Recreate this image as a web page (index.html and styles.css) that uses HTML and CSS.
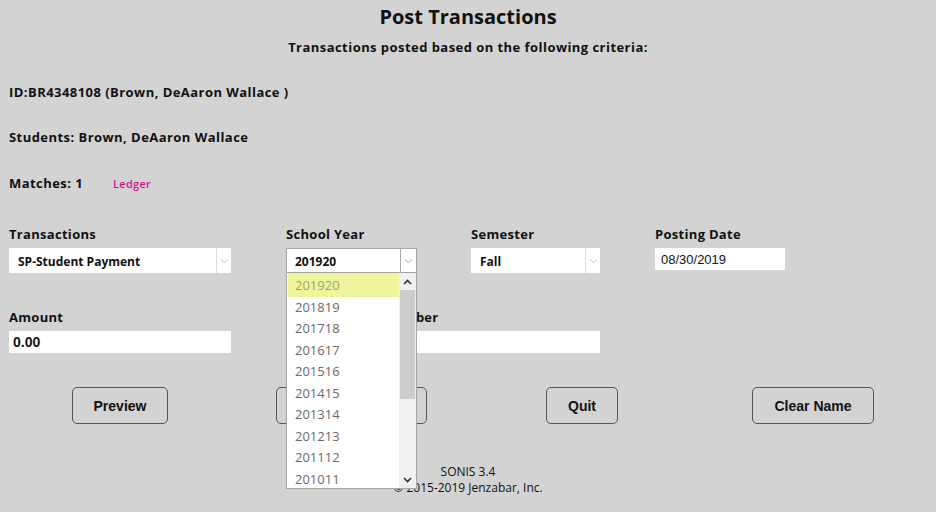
FILE: index.html
```html
<!DOCTYPE html>
<html lang="en">
<head>
    <meta charset="UTF-8">
    <meta name="viewport" content="width=device-width, initial-scale=1.0">
    <title>Post Transactions</title>
    <link rel="stylesheet" href="styles.css">
</head>
<body>
    <h1 class="page-title">Post Transactions</h1>
    <p class="subtitle">Transactions posted based on the following criteria:</p>

    <div class="info">
        <p class="info-line">ID:BR4348108 (Brown, DeAaron Wallace )</p>
        <p class="info-line">Students: Brown, DeAaron Wallace</p>
        <p class="info-line">Matches: 1 <a href="#" class="ledger">Ledger</a></p>
    </div>

    <div class="form-row">
        <div class="field">
            <label class="field-label">Transactions</label>
            <div class="select select-trans">
                <span class="select-value">SP-Student Payment</span>
                <span class="select-arrow"><svg width="9" height="6" viewBox="0 0 9 6"><path d="M1 1.5 L4.5 4.5 L8 1.5" fill="none" stroke="#c4c4c4" stroke-width="1"/></svg></span>
            </div>
        </div>
        <div class="field field-year">
            <label class="field-label">School Year</label>
            <div class="select select-year open">
                <span class="select-value">201920</span>
                <span class="select-arrow"><svg width="9" height="6" viewBox="0 0 9 6"><path d="M1 1.5 L4.5 4.5 L8 1.5" fill="none" stroke="#a8a8a8" stroke-width="1"/></svg></span>
            </div>
            <div class="dropdown">
                <ul class="options">
                    <li class="selected">201920</li>
                    <li>201819</li>
                    <li>201718</li>
                    <li>201617</li>
                    <li>201516</li>
                    <li>201415</li>
                    <li>201314</li>
                    <li>201213</li>
                    <li>201112</li>
                    <li>201011</li>
                </ul>
                <div class="scrollbar">
                    <span class="scroll-btn"><svg width="9" height="6" viewBox="0 0 9 6"><path d="M1 5 L4.5 1.5 L8 5" fill="none" stroke="#333" stroke-width="1.6"/></svg></span>
                    <span class="scroll-thumb"></span>
                    <span class="scroll-track"></span>
                    <span class="scroll-btn"><svg width="9" height="6" viewBox="0 0 9 6"><path d="M1 1 L4.5 4.5 L8 1" fill="none" stroke="#333" stroke-width="1.6"/></svg></span>
                </div>
            </div>
        </div>
        <div class="field">
            <label class="field-label">Semester</label>
            <div class="select select-sem">
                <span class="select-value">Fall</span>
                <span class="select-arrow"><svg width="9" height="6" viewBox="0 0 9 6"><path d="M1 1.5 L4.5 4.5 L8 1.5" fill="none" stroke="#c4c4c4" stroke-width="1"/></svg></span>
            </div>
        </div>
        <div class="field">
            <label class="field-label">Posting Date</label>
            <input class="text-input input-date" type="text" value="08/30/2019">
        </div>
    </div>

    <div class="form-row form-row-second">
        <div class="field">
            <label class="field-label">Amount</label>
            <input class="text-input input-amount" type="text" value="0.00">
        </div>
        <div class="field field-wide">
            <label class="field-label label-tight">Receipt/Check Number</label>
            <input class="text-input input-ref" type="text" value="">
        </div>
    </div>

    <div class="buttons">
        <button class="btn">Preview</button>
        <button class="btn btn-wide">Post Transactions</button>
        <button class="btn">Quit</button>
        <button class="btn">Clear Name</button>
    </div>

    <footer class="footer">
        <p>SONIS 3.4</p>
        <p>&copy; 2015-2019 Jenzabar, Inc.</p>
    </footer>
</body>
</html>
```

FILE: styles.css
```css
body {
    margin: 0;
    padding: 0;
    background-color: #d3d3d3;
    font-family: "Open Sans", "DejaVu Sans", sans-serif;
    color: #111;
}

p {
    margin: 0;
}

.page-title {
    margin: 4px 0 0;
    height: 26px;
    line-height: 26px;
    text-align: center;
    font-size: 20px;
    font-weight: 700;
}

.subtitle {
    margin-top: 7px;
    height: 20px;
    line-height: 20px;
    text-align: center;
    font-size: 13px;
    font-weight: 700;
    letter-spacing: 0.45px;
}

.info {
    padding-left: 9px;
}

.info-line {
    margin-top: 25px;
    height: 20px;
    line-height: 20px;
    font-size: 13px;
    font-weight: 700;
    letter-spacing: 0.45px;
}

.info-line:last-child {
    margin-top: 26px;
}

.ledger {
    margin-left: 26px;
    color: #d4148c;
    font-size: 11px;
    font-weight: 600;
    letter-spacing: 0.3px;
    text-decoration: none;
}

.form-row {
    display: grid;
    grid-template-columns: 277px 185px 184px auto;
    margin-top: 31px;
    padding-left: 9px;
}

.form-row-second {
    margin-top: 34px;
}

.field {
    position: relative;
}

.field-wide {
    grid-column: span 2;
}

.field-label {
    display: block;
    height: 20px;
    line-height: 20px;
    margin-bottom: 4px;
    font-size: 13px;
    font-weight: 700;
    letter-spacing: 0.3px;
}

.label-tight {
    letter-spacing: 0.1px;
}

.select {
    display: flex;
    align-items: stretch;
    height: 25px;
    background: white;
    box-sizing: border-box;
}

.select-value {
    flex-grow: 1;
    padding: 1px 0 0 9px;
    line-height: 26px;
    font-size: 12px;
    font-weight: 700;
}

.select-arrow {
    width: 14px;
    display: flex;
    align-items: center;
    justify-content: center;
    border-left: 1px solid #dcdcdc;
}

.select-trans {
    width: 222px;
}

.select-sem {
    width: 129px;
}

.select-year {
    width: 131px;
    border: 1px solid #a6a6a6;
}

.select-year .select-value {
    line-height: 24px;
    padding-left: 8px;
}

.select-year .select-arrow {
    width: 15px;
    border-left-color: #a6a6a6;
}

.text-input {
    display: block;
    height: 22px;
    box-sizing: border-box;
    border: none;
    outline: none;
    background: white;
    padding: 0 6px;
    font-family: "Liberation Sans", Arial, sans-serif;
    font-size: 13px;
    color: #111;
}

.input-date {
    width: 130px;
}

.input-amount {
    width: 222px;
    font-size: 14px;
    font-weight: 700;
    padding-left: 4px;
}

.input-ref {
    width: 314px;
}

/* open list of the school year select */
.dropdown {
    position: absolute;
    top: 49px;
    left: 0;
    z-index: 5;
    width: 131px;
    height: 216px;
    box-sizing: border-box;
    border: 1px solid #a6a6a6;
    border-top: none;
    background: white;
    display: flex;
}

.options {
    list-style: none;
    margin: 0;
    padding: 1px 0 0;
    flex-grow: 1;
}

.options li {
    height: 21.5px;
    line-height: 23px;
    padding-left: 8px;
    font-size: 13px;
    color: #6a6a6a;
}

.options li.selected {
    background-color: #eff59c;
    color: #a3a36e;
    margin: -1px 0 -1px 1px;
    height: 23.5px;
    line-height: 24px;
    padding-left: 7px;
}

.scrollbar {
    width: 17px;
    display: flex;
    flex-direction: column;
    background: #f0f0f0;
}

.scroll-btn {
    height: 17px;
    display: flex;
    align-items: center;
    justify-content: center;
}

.scroll-thumb {
    height: 109px;
    margin: 0 1px;
    background: #cdcdcd;
}

.scroll-track {
    flex-grow: 1;
}

.buttons {
    display: grid;
    grid-template-columns: repeat(4, 231px);
    justify-items: center;
    margin-top: 34px;
    padding-left: 4.5px;
}

.btn {
    height: 37px;
    padding: 0 21px;
    border: 1px solid #555;
    border-radius: 5px;
    background: transparent;
    font-family: "Liberation Sans", Arial, sans-serif;
    font-size: 14px;
    font-weight: 700;
    color: #111;
    cursor: pointer;
}

.btn-wide {
    width: 151px;
}

.footer {
    margin-top: 40px;
    text-align: center;
    font-size: 12px;
    line-height: 16px;
    color: #111;
}
```
